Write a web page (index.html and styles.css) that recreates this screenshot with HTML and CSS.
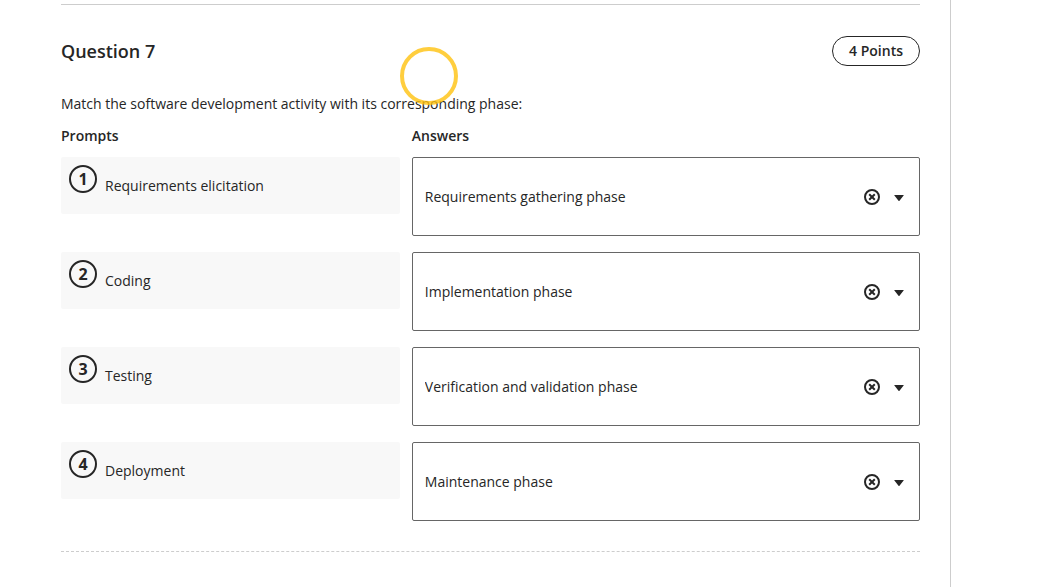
FILE: index.html
```html
<!DOCTYPE html>
<html lang="en">
<head>
<meta charset="utf-8">
<meta name="viewport" content="width=device-width, initial-scale=1">
<title>Question 7</title>
<link rel="stylesheet" href="styles.css">
</head>
<body>
<svg class="sprite" aria-hidden="true">
  <symbol id="clear" viewBox="0 0 16 16">
    <circle cx="8" cy="8" r="7" fill="none" stroke="currentColor" stroke-width="2"/>
    <path d="M5.200 5.200l5.600 5.600M10.800 5.200l-5.600 5.600" fill="none" stroke="currentColor" stroke-width="2"/>
  </symbol>
  <symbol id="caret" viewBox="0 0 10 6">
    <path d="M.6 0h8.800q.6 0 .2.500L5.500 5.700q-.5.500-1 0L.4.500Q0 0 .6 0z" fill="currentColor"/>
  </symbol>
</svg>
<main class="page">
  <section class="question">
    <header class="question-header">
      <h2 class="question-title">Question 7</h2>
      <span class="points">4 Points</span>
    </header>
    <p class="question-text">Match the software development activity with its corresponding phase:</p>
    <div class="row headings">
      <h3 class="heading">Prompts</h3>
      <h3 class="heading">Answers</h3>
    </div>
    <ol class="matches">
      <li class="row">
        <label class="prompt" for="a1"><span class="number">1</span><span class="prompt-text">Requirements elicitation</span></label>
        <div class="answer">
          <select class="answer-select" id="a1"><option>Requirements gathering phase</option></select>
          <button class="clear" type="button" aria-label="Clear answer 1"><svg class="clear-icon"><use href="#clear"/></svg></button>
          <svg class="caret" aria-hidden="true"><use href="#caret"/></svg>
        </div>
      </li>
      <li class="row">
        <label class="prompt" for="a2"><span class="number">2</span><span class="prompt-text">Coding</span></label>
        <div class="answer">
          <select class="answer-select" id="a2"><option>Implementation phase</option></select>
          <button class="clear" type="button" aria-label="Clear answer 2"><svg class="clear-icon"><use href="#clear"/></svg></button>
          <svg class="caret" aria-hidden="true"><use href="#caret"/></svg>
        </div>
      </li>
      <li class="row">
        <label class="prompt" for="a3"><span class="number">3</span><span class="prompt-text">Testing</span></label>
        <div class="answer">
          <select class="answer-select" id="a3"><option>Verification and validation phase</option></select>
          <button class="clear" type="button" aria-label="Clear answer 3"><svg class="clear-icon"><use href="#clear"/></svg></button>
          <svg class="caret" aria-hidden="true"><use href="#caret"/></svg>
        </div>
      </li>
      <li class="row">
        <label class="prompt" for="a4"><span class="number">4</span><span class="prompt-text">Deployment</span></label>
        <div class="answer">
          <select class="answer-select" id="a4"><option>Maintenance phase</option></select>
          <button class="clear" type="button" aria-label="Clear answer 4"><svg class="clear-icon"><use href="#clear"/></svg></button>
          <svg class="caret" aria-hidden="true"><use href="#caret"/></svg>
        </div>
      </li>
    </ol>
  </section>
</main>
<div class="pointer-ring"></div>
</body>
</html>
```

FILE: styles.css
```css
* {
  box-sizing: border-box;
}

body {
  margin: 0;
  background: #fff;
  color: #262626;
  font: 14px/20px "Open Sans", "Noto Sans", sans-serif;
}

.sprite {
  position: absolute;
  width: 0;
  height: 0;
}

.page {
  min-height: 100vh;
  margin-right: 92px;
  padding: 4px 30px 30px 61px;
  border-right: 1px solid #cdcdcd;
}

.question {
  padding: 31px 0 30px;
  border-top: 1px solid #cdcdcd;
  border-bottom: 1px dashed #cdcdcd;
}

.question-header {
  display: flex;
  align-items: center;
  justify-content: space-between;
}

.question-title {
  margin: 0;
  font-size: 18px;
  font-weight: 600;
  line-height: 28px;
}

.points {
  padding: 4px 16px;
  border: 1px solid #262626;
  border-radius: 15px;
  font-weight: 600;
}

.question-text {
  margin: 28px 0 12px;
}

.row {
  display: grid;
  grid-template-columns: 2fr 3fr;
  column-gap: 12px;
  align-items: start;
}

.headings {
  margin-bottom: 11px;
}

.heading {
  margin: 0;
  font-size: 14px;
  font-weight: 600;
}

.matches {
  display: grid;
  gap: 16px;
  margin: 0;
  padding: 0;
  list-style: none;
}

.prompt {
  display: flex;
  gap: 8px;
  padding: 8px;
  border-radius: 2px;
  background: #f8f8f8;
}

.number {
  flex: none;
  width: 28px;
  height: 28px;
  border: 2px solid #262626;
  border-radius: 50%;
  font-size: 16px;
  font-weight: 700;
  line-height: 24px;
  text-align: center;
}

.prompt-text {
  padding: 11px 0 10px;
}

.answer {
  position: relative;
}

.answer-select {
  display: block;
  width: 100%;
  height: 79px;
  padding: 0 64px 0 12px;
  border: 1px solid #666;
  border-radius: 2px;
  background: #fff;
  color: inherit;
  font: inherit;
  appearance: none;
}

.clear {
  position: absolute;
  top: 28px;
  right: 36px;
  display: grid;
  place-items: center;
  width: 24px;
  height: 24px;
  padding: 0;
  border: 0;
  background: none;
  color: inherit;
}

.clear-icon {
  width: 16px;
  height: 16px;
}

.caret {
  position: absolute;
  top: 38px;
  right: 16px;
  width: 10px;
  height: 6px;
  pointer-events: none;
}

.pointer-ring {
  position: absolute;
  top: 47px;
  left: 400px;
  width: 58px;
  height: 58px;
  border: 4px solid #ffc20ecc;
  border-radius: 50%;
  pointer-events: none;
}
```
